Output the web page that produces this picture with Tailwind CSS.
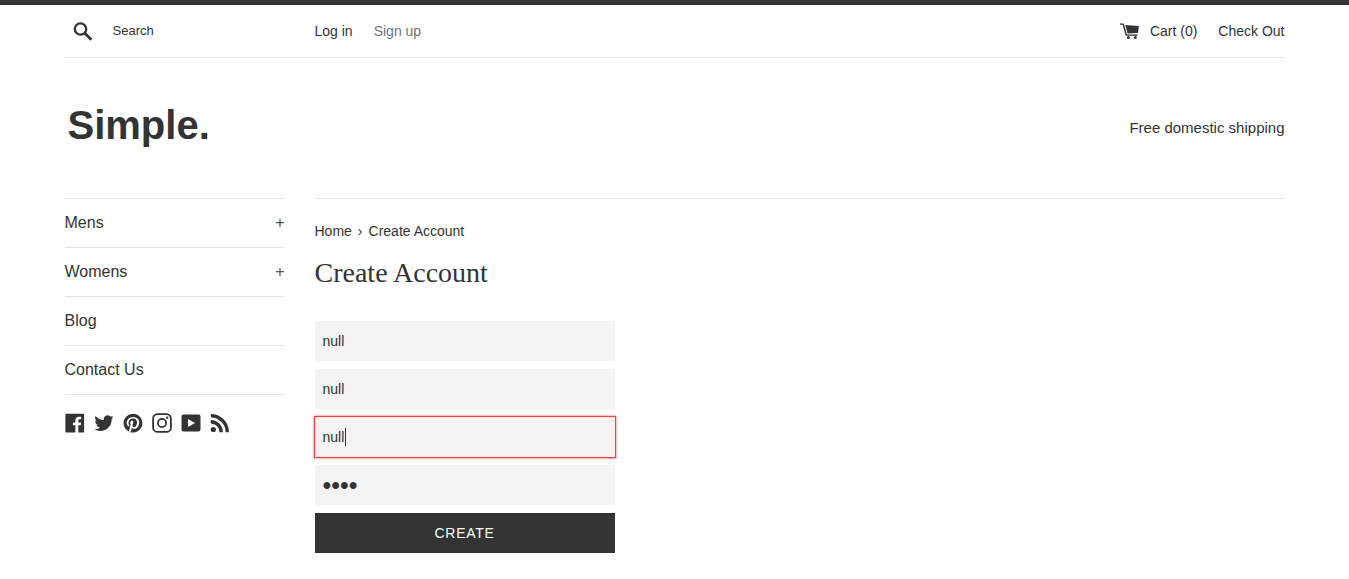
<!DOCTYPE html>
<html lang="en">
<head>
<meta charset="utf-8">
<meta name="viewport" content="width=device-width, initial-scale=1">
<title>Create Account – Simple</title>
<script src="https://cdn.jsdelivr.net/npm/@tailwindcss/browser@4"></script>
</head>
<body class="border-t-5 border-[#333] bg-white font-['Liberation_Sans',Arial,sans-serif] text-sm text-[#333]">
<div class="mx-auto max-w-[1250px] px-[15px]">
  <header>
    <div class="flex h-[53px] items-center gap-[30px] border-b border-[#e4e4e4]">
      <form class="flex w-[220px] shrink-0 items-center" role="search">
        <button type="button" aria-label="Search" class="pl-2">
          <svg class="size-5" viewBox="0 0 20 20" fill="none" stroke="#333"><circle cx="7.500" cy="8" r="5.700" stroke-width="2.300"/><path d="M11.800 12.300l6.500 6.500" stroke-width="2.800"/></svg>
        </button>
        <input type="search" aria-label="Search" placeholder="Search" class="ml-5 w-40 text-[13px] placeholder:text-[#333] focus:outline-none">
      </form>
      <nav class="flex flex-1 items-center gap-[21px]" aria-label="Account">
        <a href="#">Log in</a>
        <a href="#" class="text-[#737373]">Sign up</a>
      </nav>
      <nav class="flex items-center gap-[21px]" aria-label="Cart">
        <a href="#" class="flex items-center gap-[10px]">
          <svg class="h-4 w-5" viewBox="0 0 20 16" fill="#333"><path d="M0 .400h3.200c.4 0 .6.200.7.500l3 10.500h10.700v1.400H6.200c-.4 0-.6-.2-.7-.5L2.600 1.800H0z"/><path d="M5.200 2.100l13.200.9c.3 0 .4.200.4.500l-.7 6c0 .3-.2.400-.5.400l-10 .7z"/><circle cx="8.300" cy="14.500" r="1.500"/><circle cx="15.400" cy="14.500" r="1.500"/></svg>
          Cart (0)</a>
        <a href="#">Check Out</a>
      </nav>
    </div>
    <div class="flex h-[140px] items-center justify-between">
      <a href="#" class="pb-1.5 pl-[3px] text-[40px] leading-none font-bold">Simple.</a>
      <p class="text-[15px]">Free domestic shipping</p>
    </div>
  </header>
  <div class="flex gap-[30px]">
    <aside class="w-[220px] shrink-0">
      <ul class="divide-y divide-[#e4e4e4] border-y border-[#e4e4e4] text-base">
        <li class="flex h-12 items-center justify-between box-content"><a href="#">Mens</a><button type="button" aria-label="Show Mens menu" class="text-[#555]">+</button></li>
        <li class="flex h-12 items-center justify-between box-content"><a href="#">Womens</a><button type="button" aria-label="Show Womens menu" class="text-[#555]">+</button></li>
        <li class="flex h-12 items-center box-content"><a href="#">Blog</a></li>
        <li class="flex h-12 items-center box-content"><a href="#">Contact Us</a></li>
      </ul>
      <div class="mt-[18px] flex gap-[9px]">
        <a href="#" aria-label="Facebook"><svg class="size-5" viewBox="0 0 20 20" fill="#333"><path d="M18.050.811q.439 0 .744.305t.305.744v16.637q0 .439-.305.744t-.744.305h-4.732v-7.221h2.415l.342-2.854h-2.757v-1.830q0-.659.293-1t1.073-.342h1.488V3.762q-.976-.098-2.171-.098-1.634 0-2.635.964t-1 2.720V9.470H7.951v2.854h2.415v7.221H1.413q-.439 0-.744-.305t-.305-.744V1.859q0-.439.305-.744T1.413.810H18.050z"/></svg></a>
        <a href="#" aria-label="Twitter"><svg class="size-5" viewBox="0 0 20 20" fill="#333"><path d="M19.551 4.208q-.815 1.202-1.956 2.038 0 .082.020.255t.020.255q0 1.589-.469 3.179t-1.426 3.036-2.272 2.567-3.158 1.793-3.963.672q-3.301 0-6.031-1.773.571.041.937.041 2.751 0 4.911-1.671-1.284-.020-2.292-.784T2.456 11.850q.346.082.754.082.550 0 1.039-.163-1.365-.285-2.262-1.365T1.090 7.918v-.041q.774.408 1.773.448-.795-.530-1.263-1.396t-.469-1.864q0-1.019.509-1.997 1.487 1.854 3.596 2.924T9.810 7.184q-.143-.509-.143-.897 0-1.630 1.161-2.781t2.832-1.151q.815 0 1.569.326t1.284.917q1.345-.265 2.506-.958-.428 1.386-1.732 2.180 1.243-.163 2.262-.611z"/></svg></a>
        <a href="#" aria-label="Pinterest"><svg class="size-5" viewBox="0 0 20 20" fill="#333"><path d="M9.958.811q1.903 0 3.635.744t2.988 2 2 2.988.744 3.635q0 2.537-1.256 4.696t-3.415 3.415-4.696 1.256q-1.390 0-2.659-.366.707-1.147.951-2.025l.659-2.561q.244.463.903.817t1.390.354q1.464 0 2.622-.842t1.793-2.305.634-3.293q0-2.171-1.671-3.769t-4.257-1.598q-1.586 0-2.903.537T5.298 5.897 4.066 7.775t-.427 2.037q0 1.268.476 2.220t1.427 1.342q.171.073.293.012t.171-.232q.171-.610.195-.756.098-.268-.122-.512-.634-.707-.634-1.830 0-1.854 1.281-3.183t3.354-1.329q1.830 0 2.854 1t1.025 2.610q0 1.342-.366 2.476t-1.049 1.817-1.561.683q-.732 0-1.195-.537t-.293-1.269q.098-.342.256-.878t.268-.915.207-.817.098-.732q0-.610-.317-1t-.927-.390q-.756 0-1.269.695t-.512 1.744q0 .390.061.756t.134.537l.073.171q-1 4.342-1.220 5.098-.195.927-.146 2.171-2.513-1.122-4.062-3.440T.590 10.177q0-3.879 2.744-6.623T9.957.810z"/></svg></a>
        <a href="#" aria-label="Instagram"><svg class="size-5" viewBox="0 0 20 20" fill="none" stroke="#333" stroke-width="1.800"><rect x="1.100" y="1.100" width="17.800" height="17.800" rx="4.500"/><circle cx="10" cy="10" r="4.100"/><circle cx="15.200" cy="4.800" r="1.200" fill="#333" stroke="none"/></svg></a>
        <a href="#" aria-label="YouTube"><svg class="size-5" viewBox="0 0 20 20" fill="#333"><path fill-rule="evenodd" d="M2.500 1.500h15Q19.500 1.500 19.500 3.500v13q0 2-2 2h-15q-2 0-2-2v-13q0-2 2-2zM7 6v8l7-4z"/></svg></a>
        <a href="#" aria-label="RSS"><svg class="size-5" viewBox="0 0 20 20" fill="none" stroke="#333" stroke-width="3.400"><circle cx="3.300" cy="16.500" r="2.600" fill="#333" stroke="none"/><path d="M.8 8.700c5.700 0 10.400 4.700 10.400 10.500M.8 2.700c9 0 16.500 7.500 16.500 16.500"/></svg></a>
      </div>
    </aside>
    <main class="min-w-0 flex-1 border-t border-[#e4e4e4] pt-[22px] pb-6">
      <nav class="flex gap-[6px] leading-5" aria-label="Breadcrumb"><a href="#">Home</a><span aria-hidden="true">›</span><span>Create Account</span></nav>
      <h1 class="mt-3 font-['Liberation_Serif',serif] text-[28px] leading-10">Create Account</h1>
      <form class="mt-7 flex max-w-[300px] flex-col gap-2">
        <input type="text" aria-label="First Name" value="null" class="h-10 w-full bg-[#f3f3f3] px-2 focus:outline-none">
        <input type="text" aria-label="Last Name" value="null" class="h-10 w-full bg-[#f3f3f3] px-2 focus:outline-none">
        <div class="relative">
          <input type="email" aria-label="Email" value="null" class="block h-10 w-full bg-[#f3f3f3] px-2 caret-transparent shadow-[0_0_0_1px_#ff3b3b,0_0_2px_1px_#ff3b3b] focus:outline-none">
          <span class="absolute top-[11px] left-[30px] h-[18px] w-px bg-[#333]"></span>
        </div>
        <input type="password" aria-label="Password" value="null" class="h-10 w-full bg-[#f3f3f3] px-2 text-[25px] focus:outline-none">
        <button type="submit" class="h-10 w-full bg-[#333] tracking-wider text-white uppercase">Create</button>
      </form>
    </main>
  </div>
</div>
</body>
</html>
